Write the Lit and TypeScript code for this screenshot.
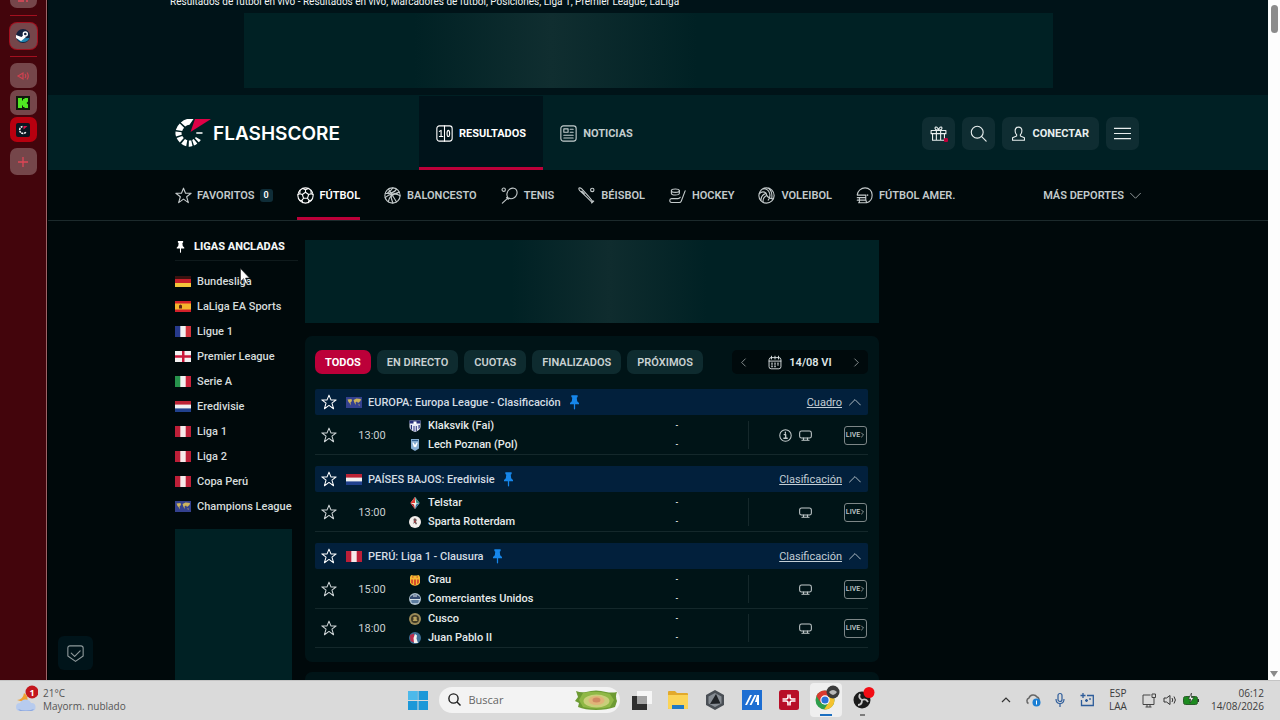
import { LitElement, html, svg, css, nothing, TemplateResult } from "lit";
import { customElement, state } from "lit/decorators.js";
import { classMap } from "lit/directives/class-map.js";

type Art = TemplateResult;

const line = (body: unknown, cls = "ico") =>
  html`<svg class=${cls} viewBox="0 0 20 20" aria-hidden="true">${body}</svg>`;

/* ---------- line icons ---------- */
const STAR = svg`<path d="M10 1.400l2.400 6h6.600l-5.300 4.100 2 6.900L10 14.300l-5.700 4.100 2-6.900L1 7.400h6.600z"/>`;
const SOCCER = svg`<circle cx="10" cy="10" r="9"/><path d="M10 6.200l3.700 2.700-1.400 4.300H7.700L6.300 8.900zM10 6.200V3.300M13.700 8.900l3-1M12.300 13.200l1.900 2.600M7.700 13.200l-1.900 2.600M6.300 8.900l-3-1M6.700 1.800L10 3.300l3.300-1.500M18.900 8.900l-2.200-1-.3-4M17 15.500l-2.800.3-1 2.600M3 15.500l2.800.3 1 2.600M1.100 8.900l2.200-1 .3-4"/>`;
const BASKET = svg`<circle cx="10" cy="10" r="9"/><path d="M5.200 2.400l9.600 15.200M1.400 7.400C7 8.400 13 6 14.800 2.500M1.300 12.500C7 7 15 7 18.900 10.500M5 17.500C5.500 12 11 8 18 6M10.500 1c-1 2-3 4-6 5.500M8.500 8.200c-.5 4 .5 7.500 2 10.700"/>`;
const TENNIS = svg`<circle cx="3.200" cy="3.200" r="2"/><path d="M8.200 12.700C5.800 9.500 7 4.500 10.500 2.300c3.200-1.900 6.600-1 7.800 1.500 1.400 3 .2 7-2.800 8.800-2.300 1.400-5 1.500-7.300.1zM8.200 12.700l-1.700-.2M8.200 12.700l.3 1.800M7.700 13.300L1.600 19"/>`;
const BASEBALL = svg`<circle cx="16.800" cy="3.400" r="2"/><path d="M1.200 1.300c1-.6 2-.2 3 .7l8 8.600 5.300 6.500M1.200 1.300c-.5 1 0 2 .9 3l8.500 8 5.900 5.700M16 18.800l2.500-2.300M4.500 5l3 3"/>`;
const HOCKEY = svg`<ellipse cx="7.500" cy="4.300" rx="4.700" ry="2"/><path d="M2.800 4.300v3c0 2.800 9.400 2.800 9.400 0v-3M19 4.500l-4.500 12c-.5 1.400-1.300 1.800-2.500 1.800H3c-2.800 0-2.800-4.600 0-4.600h7.500c1.400 0 2-.4 2.700-1.600"/>`;
const VOLLEY = svg`<circle cx="10" cy="10" r="9"/><path d="M6 2c4-.2 6.500 2 7.500 5s.5 6-1.500 8.500M9.500 7.200C6 8.500 3.500 11.500 3.300 15.800M9.500 7.200c.5 3.500 2.800 6 7.800 6.800M1.300 8c3-3 5.200-3.300 8.200-.8M6 17.900c-.5-3 1-6 4-7.800M12.500 1.500c3 2.500 4.500 6 3.700 11.700"/>`;
const HELMET = svg`<path d="M1.500 9C2 4.500 6 1 10.700 1 15.500 1 19 4.800 19 9.300c0 4.200-2.300 7.900-6.500 9.200L11.500 15V9.500H1.500zM1.500 12.500h10M1.500 15.500h10M3 18.500h9.500M4 12.500v6"/><circle cx="13.500" cy="9.500" r=".4"/>`;
const SCORES = svg`<rect x="1" y="1" width="18" height="18" rx="3"/><path d="M10 1v18M4 7.500l2-1.200v7M4 13.500h4M14.500 6.300c-2 0-2 7.200 0 7.200s2-7.200 0-7.200z"/>`;
const NEWS = svg`<rect x="1" y="1" width="18" height="18" rx="3"/><path d="M4.500 4.500h5v4h-5zM12 5h3.500M12 8.500h3.500M4.500 12h11M4.500 15.300h11"/>`;
const GIFT = svg`<path d="M1.300 6.500h17.400v3.700H1.300zM3 10.200V18h14v-7.800M7.500 6.500V18M12.500 6.500V18M10 6.500C7 6 5.500 4.800 6 3.200c.6-1.600 3.500-1 4 3.300.5-4.300 3.400-4.900 4-3.300.5 1.600-1 2.800-4 3.300z"/>`;
const SEARCH = svg`<circle cx="8.500" cy="8.500" r="7"/><path d="M13.500 13.500L19 19"/>`;
const USER = svg`<path d="M10 2.500c-2.800 0-4 1.800-4 4.300 0 2.200.7 3.700 1.800 4.700v1.500L3 15v3h14v-3l-4.800-2v-1.500c1.100-1 1.800-2.500 1.800-4.700 0-2.500-1.200-4.300-4-4.300z"/>`;
const MENU = svg`<path d="M0 4h20M0 10h20M0 16h20"/>`;
const DOWN = svg`<path d="M1 6l9 9 9-9"/>`;
const UP = svg`<path d="M1 15l9-9 9 9"/>`;
const LEFT = svg`<path d="M14 2l-8 8 8 8"/>`;
const RIGHT = svg`<path d="M6 2l8 8-8 8"/>`;
const CALENDAR = svg`<rect x="1.500" y="3" width="17" height="16" rx="3"/><path d="M1.500 8h17M5 1v4M10 1v4M15 1v4M5 11h1.500M9.300 11h1.500M13.500 11H15M5 13.500h1.500M9.300 13.500h1.500M13.500 13.500H15M5 16h1.500M9.300 16h1.500"/>`;
const INFO = svg`<circle cx="10" cy="10" r="8.800"/><path d="M8 8.500h2.300V14M7.500 14.200h5.200M9.800 5v1.600" stroke-width="2"/>`;
const TV = svg`<rect x="1" y="3" width="18" height="11" rx="3"/><path d="M7 14v2.500M13 14v2.500M4.500 17.200h11"/>`;
const SHIELD = svg`<path d="M3.500 1h13A2.500 2.500 0 0 1 19 3.500V13l-9 6.300L1 13V3.500A2.500 2.500 0 0 1 3.500 1zM5 9.500l4 4L15.500 7"/>`;

const pin = (cls: string) => html`<svg class=${cls} viewBox="0 0 10 16" aria-hidden="true">
  <path d="M1.500 0h7v2l-1 .7.5 4L10 8.500V10H5.700v5l-.7 1-.7-1v-5H0V8.500l2-1.800.5-4-1-.7z"/></svg>`;

/* ---------- flags ---------- */
const FLAGS: Record<string, Art> = {
  de: svg`<rect width="16" height="4" fill="#3a1210"/><rect y="3" width="16" height="4" fill="#c8202a"/><rect y="7" width="16" height="4" fill="#f3c53a"/>`,
  es: svg`<rect width="16" height="11" fill="#d3202a"/><rect y="2.500" width="16" height="6" fill="#f5b52c"/><path d="M4 4.500l1.500-1 1.500 1v3H4z" fill="#5a2416"/>`,
  fr: svg`<rect width="16" height="11" fill="#f1f1f1"/><rect width="5.300" height="11" fill="#273a8c"/><rect x="10.700" width="5.300" height="11" fill="#d1323c"/>`,
  en: svg`<rect width="16" height="11" fill="#f4f0f1"/><path d="M7 0h2.500v11H7zM0 4.300h16v2.400H0z" fill="#c9183a"/>`,
  it: svg`<rect width="16" height="11" fill="#f1f1f1"/><rect width="5.300" height="11" fill="#27924c"/><rect x="10.700" width="5.300" height="11" fill="#c9223b"/>`,
  nl: svg`<rect width="16" height="11" fill="#f1f1f1"/><rect width="16" height="3.600" fill="#bb2336"/><rect y="7.400" width="16" height="3.600" fill="#21418e"/>`,
  pe: svg`<rect width="16" height="11" fill="#f6e9ea"/><rect width="5.300" height="11" fill="#bd1f38"/><rect x="10.700" width="5.300" height="11" fill="#bd1f38"/>`,
  eu: svg`<rect width="16" height="11" fill="#34418f"/><path d="M1.500 2.500l4-.5.500 2-1.500 1.500.500 3-1.500-2.500-1-1zM7.500 3l3-1.500 4.500.5-.5 2-2.500 2-1-1.500-1.500 1 .5 2.500-1.500-2z" fill="#cdb45c"/><path d="M12 7.500l2 .3-.8 1z" fill="#cdb45c"/>`,
};
const flag = (id: string) => html`<svg class="flag" viewBox="0 0 16 11" aria-hidden="true">${FLAGS[id]}</svg>`;

/* ---------- club crests ---------- */
const CRESTS: Record<string, Art> = {
  klaksvik: svg`<path d="M.5.500h11v6.500q0 3-5.500 5-5.500-2-5.500-5z" fill="#e9ebf6"/><path d="M.5.500h11v3H.5zM1.800 5h1.200v5l-1.200-1zM4.500 6h1v5.500l-1-.5zM6.800 6h1v5l-1 .5zM9.500 5h1.200v3l-1.200 1z" fill="#28307c"/><path d="M4.500 1.500h3v2.500h-3z" fill="#fff"/>`,
  lech: svg`<path d="M2 0h8v9.500l-4 2.500-4-2.500z" fill="#86add0"/><path d="M4 3l2 3 2-3 .6 1L7 8.500l-1-1-1 1L3.500 4z" fill="#fff"/><path d="M3 1h6v1H3z" fill="#33608f"/>`,
  telstar: svg`<path d="M6 0l4.500 6-4.500 6-4.500-6z" fill="#f4efe6"/><path d="M6 0v6H1.500z" fill="#e33b34"/><path d="M6 0l4.500 6-3 .6z" fill="#358c86"/><path d="M1.500 6l3.500 1.500 1 4.500z" fill="#c2272b"/><path d="M10.500 6l-4.500 6 1-4.500z" fill="#2b6d9d"/>`,
  sparta: svg`<circle cx="6" cy="6" r="6" fill="#f3efec"/><path d="M4.500 3l1.200-.8 1.600.9.400 1.300-.7 1.100 1 2.500-1.200.6-1-1.800-1.500 1.100.5-2z" fill="#6a5656"/><path d="M5 5l1.300-.4.500 1.500-1.300.6z" fill="#c03a40"/>`,
  grau: svg`<path d="M1 3q1-3 3-1.500h4Q10 0 11 3v6q-2 3-5 2.700Q3 12 1 9z" fill="#f4b833"/><path d="M2.300 5.500h1.500V10l-1.500-1zM5.200 5.500h1.600v5.700H5.200zM8.200 5.500h1.500V9l-1.500 1z" fill="#d2322a"/><path d="M3 2.500h1.500v1H3zM7.500 2.500H9v1H7.500z" fill="#c5402c"/>`,
  comerciantes: svg`<circle cx="6" cy="6" r="6" fill="#a9bccb"/><path d="M1 4q5-5 10 0v2H1z" fill="#33496f"/><path d="M2 7.500q4-2 8 0l-1 2.500H3z" fill="#5c7c9f"/><path d="M4 2.500h4v1H4zM1 6.200h10v.8H1z" fill="#e8eef2"/>`,
  cusco: svg`<circle cx="6" cy="6" r="6" fill="#9a8a58"/><circle cx="6" cy="6" r="4" fill="#403a26"/><path d="M4 4.500l2-1 2 1-.5 1.500 1 2H3.700l1-2z" fill="#b8a25f"/>`,
  juanpablo: svg`<circle cx="6" cy="6" r="6" fill="#3d6f97"/><path d="M1 3l4-1.500v9L1.500 9z" fill="#b92c4c"/><path d="M6 2l2 1.500-.5 3L9 11H5l-.5-5z" fill="#f3f1ee"/>`,
};
const crest = (id: string) => html`<svg class="crest" viewBox="0 0 12 12" aria-hidden="true">${CRESTS[id]}</svg>`;

/* ---------- data ---------- */
const PINNED: [string, string][] = [
  ["de", "Bundesliga"], ["es", "LaLiga EA Sports"], ["fr", "Ligue 1"], ["en", "Premier League"],
  ["it", "Serie A"], ["nl", "Eredivisie"], ["pe", "Liga 1"], ["pe", "Liga 2"],
  ["pe", "Copa Perú"], ["eu", "Champions League"],
];

const SPORTS: [string, Art][] = [
  ["Fútbol", SOCCER], ["Baloncesto", BASKET], ["Tenis", TENNIS], ["Béisbol", BASEBALL],
  ["Hockey", HOCKEY], ["Voleibol", VOLLEY], ["Fútbol amer.", HELMET],
];

const FILTERS = ["Todos", "En directo", "Cuotas", "Finalizados", "Próximos"];

interface Match { time: string; info?: boolean; teams: [string, string][]; }
interface League { flag: string; name: string; link: string; matches: Match[]; }

const LEAGUES: League[] = [
  { flag: "eu", name: "EUROPA: Europa League - Clasificación", link: "Cuadro", matches: [
    { time: "13:00", info: true, teams: [["klaksvik", "Klaksvik (Fai)"], ["lech", "Lech Poznan (Pol)"]] } ] },
  { flag: "nl", name: "PAÍSES BAJOS: Eredivisie", link: "Clasificación", matches: [
    { time: "13:00", teams: [["telstar", "Telstar"], ["sparta", "Sparta Rotterdam"]] } ] },
  { flag: "pe", name: "PERÚ: Liga 1 - Clausura", link: "Clasificación", matches: [
    { time: "15:00", teams: [["grau", "Grau"], ["comerciantes", "Comerciantes Unidos"]] },
    { time: "18:00", teams: [["cusco", "Cusco"], ["juanpablo", "Juan Pablo II"]] } ] },
];

/* ---------- browser side strip ---------- */
@customElement("side-strip")
export class SideStrip extends LitElement {
  static styles = css`
    :host { display: flex; flex-direction: column; align-items: center; width: 47px; flex: none;
      background: #43050c; border-right: 1px solid #9c6468; overflow: hidden; }
    .tile { width: 27px; height: 25px; padding: 0; border: 0; border-radius: 7px; background: #75464a;
      display: grid; place-items: center; margin-bottom: 2px; flex: none; }
    .cut { height: 8px; border-radius: 0 0 7px 7px; margin-bottom: 7px; align-items: start; }
    .steam { height: 26px; margin: 7px 0; box-shadow: 0 0 0 1px #a3101f; }
    .on { background: #b8000f; }
    .add { height: 27px; margin-top: 4px; }
    .rule { width: 27px; height: 1px; flex: none; background: #a3101f; }
    .last { margin-bottom: 6px; }
    svg { width: 14px; height: 14px; display: block; }
    .cut svg { height: 4px; }
  `;
  render() {
    return html`
      <button class="tile cut" aria-label="Panel"><svg viewBox="0 0 14 4"><path d="M2 1h6M10 1h2" stroke="#e2485a" stroke-width="1.500"/></svg></button>
      <span class="rule"></span>
      <button class="tile steam" aria-label="Steam"><svg viewBox="0 0 14 14">
        <circle cx="7" cy="7" r="7" fill="#14233f"/><path d="M1 9.500A7 7 0 0 0 13.500 9z" fill="#2285b0"/>
        <circle cx="9.300" cy="5" r="2.700" fill="#fff"/><circle cx="9.300" cy="5" r="1.300" fill="#14233f"/>
        <path d="M0 6l5.500 2 2-2 2.500 2-3 2.500-2 1.500L0 9z" fill="#fff"/></svg></button>
      <span class="rule last"></span>
      <button class="tile" aria-label="Audio"><svg viewBox="0 0 14 14" fill="none" stroke="#d0414f" stroke-width="1.200">
        <path d="M2 7l5-3v6zM9 5q1.500 2 0 4M11 3.500q2.500 3.500 0 7"/></svg></button>
      <button class="tile" aria-label="Kick"><svg viewBox="0 0 14 14"><rect width="14" height="14" fill="#101a0c"/>
        <path d="M2 2h4v2.500h1V3h1.500V2H12v3.500l-1.500 1.500L12 8.500V12H8.500v-1H7V9.500H6V12H2z" fill="#4fe822"/></svg></button>
      <button class="tile on" aria-label="Flashscore"><svg viewBox="0 0 14 14"><rect width="14" height="14" rx="2" fill="#0a1620"/>
        <path d="M6.500 3.500A3.500 3.500 0 1 0 10 9" fill="none" stroke="#fff" stroke-width="1.500" stroke-dasharray="2 .7"/><path d="M7.500 3h4l-4 3.500z" fill="#e0134c"/></svg></button>
      <button class="tile add" aria-label="Añadir"><svg viewBox="0 0 14 14"><path d="M7 2v10M2 7h10" stroke="#df4656" stroke-width="1.300"/></svg></button>
    `;
  }
}

/* ---------- desktop task bar ---------- */
@customElement("task-bar")
export class TaskBar extends LitElement {
  static styles = css`
    :host { display: grid; grid-template-columns: 1fr auto 1fr; align-items: center; height: 40px; flex: none;
      background: #dadada; color: #3c3c3c; font: 10px/13px "Open Sans", "Noto Sans", sans-serif; box-sizing: border-box;
      border-top: 1px solid #c4c4c4; padding-bottom: 2px; }
    .weather { display: flex; align-items: center; gap: 5px; padding-left: 14px; color: #555; }
    .weather svg { width: 24px; height: 30px; }
    .badge { font: 700 9px "Open Sans", sans-serif; }
    .dock { display: flex; align-items: center; gap: 5px; }
    .app { width: 32px; height: 34px; padding: 0; border: 0; background: none; border-radius: 4px; display: grid; place-items: center; }
    .app svg { width: 30px; height: 34px; display: block; }
    .active { background: #efefef; }
    .search { display: flex; align-items: center; width: 181px; height: 26px; box-sizing: border-box; padding: 0 2px 0 9px;
      border-radius: 13px; background: #f3f3f3; gap: 8px; }
    .search .lens { width: 13px; height: 13px; flex: none; }
    .search .art { width: 43px; height: 20px; flex: none; }
    input { flex: 1; min-width: 0; border: 0; padding: 0; background: none; outline: 0; font: 11px "Open Sans", sans-serif; color: #666; }
    input::placeholder { color: #666; opacity: 1; }
    .tray { display: flex; align-items: center; justify-content: flex-end; gap: 8px; padding-right: 16px; }
    .tray svg { width: 16px; height: 16px; display: block; }
    .two { text-align: center; }
    .clock { text-align: right; margin-left: 4px; }
    .lang { margin: 0 6px; }
    .net { display: flex; gap: 5px; }
    .early { display: flex; gap: 11px; }
  `;
  render() {
    return html`
      <div class="weather">
        <svg viewBox="0 0 24 30" aria-hidden="true"><path d="M3 15q6 0 7-7 5 3 3 10z" fill="#f0a030"/>
          <path d="M6 26a4 4 0 0 1 0-8 6 6 0 0 1 11 0 4 4 0 0 1 1 8z" fill="#b7cbee"/><path d="M4 24q8 3 16 0-1 2-3 2H6z" fill="#8aa6de"/>
          <circle cx="18" cy="7" r="6.500" fill="#c3161d"/><text class="badge" x="15.500" y="10.500" fill="#fff">1</text></svg>
        <div>21°C<br />Mayorm. nublado</div>
      </div>
      <div class="dock">
        <button class="app" aria-label="Inicio"><svg viewBox="0 0 30 34"><path d="M5 8h9.500v9H5zM15.500 8H25v9h-9.500zM5 18h9.500v9H5zM15.500 18H25v9h-9.500z" fill="#1c98d8"/><path d="M5 8h9.500v9H5z" fill="#4cb9ea"/></svg></button>
        <label class="search">
          <svg class="lens" viewBox="0 0 13 13" fill="none" stroke="#1d1d1d" stroke-width="1.400"><circle cx="5.500" cy="5.500" r="4.600"/><path d="M9 9l3.500 3.500"/></svg>
          <input type="search" placeholder="Buscar" aria-label="Buscar" />
          <svg class="art" viewBox="0 0 43 20"><path d="M1 1q5 2 10 1 10-3 20 0 6 1 11 0-2 4 0 9l-2 6q-8 3-19 3T3 17l1-4-4-2 3-4z" fill="#6d9b33"/>
            <path d="M8 3q13-3 27 1l4 6-4 7q-13 3-27 0l-4-7z" fill="#8fb846"/>
            <ellipse cx="21.500" cy="11" rx="13" ry="6.500" fill="#c9cf7a"/><ellipse cx="21.500" cy="10.500" rx="8" ry="4.500" fill="#e0b478"/><ellipse cx="21.500" cy="10" rx="4" ry="2.500" fill="#d08a62"/></svg>
        </label>
        <button class="app" aria-label="Vista de tareas"><svg viewBox="0 0 30 34"><path d="M11 8h15v13H11z" fill="#f6f6f6"/><path d="M6 13h15v14H6z" fill="#2f2f2f"/><path d="M11 13h10v8H11z" fill="#a4a4a4"/></svg></button>
        <button class="app" aria-label="Explorador"><svg viewBox="0 0 30 34"><path d="M5 9q0-1 1-1h6l2 2h10q1 0 1 1v14q0 1-1 1H6q-1 0-1-1z" fill="#e2a92c"/><path d="M5 12h20v13q0 1-1 1H6q-1 0-1-1z" fill="#fbd457"/><path d="M9 22h12v4H9z" fill="#2179c5"/></svg></button>
        <button class="app" aria-label="Armoury"><svg viewBox="0 0 30 34"><path d="M15 7l9 5v10l-9 5-9-5V12z" fill="#4a4f55"/><path d="M15 10l6.500 3.500v7L15 24l-6.500-3.500v-7z" fill="#878d94"/><path d="M16 11l4.500 9.500L10 21z" fill="#1f2226"/></svg></button>
        <button class="app" aria-label="MyASUS"><svg viewBox="0 0 30 34"><path d="M5 7h20v20H5z" fill="#1d6ed2"/><path d="M8 22l5-10h2l-5 10zM12.500 22l5-10h2l-5 10zM20 12h2v10h-2v-3h-2z" fill="#fff"/></svg></button>
        <button class="app" aria-label="Grabadora"><svg viewBox="0 0 30 34"><rect x="5" y="7" width="20" height="20" rx="2.500" fill="#b80f28"/><path d="M14 11.500v2.500q0 2-2 2H8.500M16 22.500V20q0-2 2-2h3.500M16 11.500v2.500q0 2 2 2h3.500M14 22.500V20q0-2-2-2H8.500" fill="none" stroke="#fff" stroke-width="1.600"/><circle cx="15" cy="17" r="1" fill="#b80f28"/></svg></button>
        <button class="app active" aria-label="Chrome"><svg viewBox="0 0 30 34"><circle cx="14" cy="17" r="9.500" fill="#2f9e4c"/><path d="M14 7.500a9.500 9.500 0 0 0-8.600 5.500L10 20l4-3h9a9.500 9.500 0 0 0-9-9.500z" fill="#d93a30"/><path d="M23 14a9.500 9.500 0 0 1-10 12.500L18 19l-1-5z" fill="#f5c22f"/><circle cx="14" cy="17" r="4.700" fill="#fff"/><circle cx="14" cy="17" r="3.600" fill="#2b71d9"/>
          <circle cx="22" cy="9" r="6.500" fill="#3b3b3b"/><path d="M18 9q4-4 8 0-2 3-4 3t-4-3z" fill="#b9b9b9"/><path d="M9 31h12v2H9z" fill="#1b6fc0"/></svg></button>
        <button class="app" aria-label="OBS"><svg viewBox="0 0 30 34"><circle cx="14" cy="17" r="8.500" fill="#1b1b1b"/><path d="M14 17q-4-2-2-6M14 17q4-2 6 2M14 17q0 5-4 5" fill="none" stroke="#c9c9c9" stroke-width="1.800"/><circle cx="21" cy="9.500" r="5.500" fill="#f30c14"/><path d="M12 31h5v2h-5z" fill="#7c7c7c"/></svg></button>
      </div>
      <div class="tray">
        <div class="early">
          <svg viewBox="0 0 16 16" fill="none" stroke="#333" stroke-width="1.200"><path d="M4 10l4-4 4 4"/></svg>
          <svg viewBox="0 0 16 16"><path d="M3.500 11.500A3 3 0 0 1 4 6a4.500 4.500 0 0 1 8-1 3 3 0 0 1 2 3" fill="none" stroke="#666" stroke-width="1.500"/><circle cx="11.500" cy="10.500" r="4" fill="#1b7fd4"/><path d="M11 8.500h1v4h-1z" fill="#fff"/></svg>
          <svg viewBox="0 0 16 16" fill="none" stroke="#2d5c9a" stroke-width="1.200"><rect x="6" y="1.500" width="4" height="8" rx="2"/><path d="M4 7q0 4.500 4 4.500T12 7M8 11.500V15"/></svg>
          <svg viewBox="0 0 16 16" fill="none" stroke="#2d5c9a" stroke-width="1.300"><path d="M8 3.500h6.300v10H2.500V8M4 1v5M1.500 3.500h5M7.500 7v3M6 8.500h3M11 6v2"/></svg>
        </div>
        <div class="two lang">ESP<br />LAA</div>
        <div class="net">
          <svg viewBox="0 0 16 16" fill="none" stroke="#444"><path d="M9.500 3H2v9.500h11V8M6 12.500V15M9 12.500V15M4.500 15h6M11 2h3.500v3.500H11zM13 5.500V8"/></svg>
          <svg viewBox="0 0 16 16" fill="none" stroke="#333"><path d="M2 6h2.500L8 3.500v9L4.500 10H2zM10 6q1.500 2 0 4M12 4.500q2.800 3.500 0 7"/></svg>
          <svg viewBox="0 0 16 16"><rect x=".5" y="4.500" width="14" height="8" rx="2" fill="#1c8a1f" stroke="#2a5c2b"/><path d="M15 7h1v3h-1z" fill="#333"/><path d="M8.500 1L5.500 7h2.300L7 11l3.800-5.500H8.300z" fill="#fff" stroke="#222" stroke-width=".6"/></svg>
        </div>
        <div class="clock">06:12<br />14/08/2026</div>
      </div>
    `;
  }
}

/* ---------- page ---------- */
@customElement("app-root")
export class AppRoot extends LitElement {
  @state() private filter = "Todos";

  static styles = css`
    :host { display: flex; flex-direction: column; height: 100vh; overflow: hidden; background: #000809;
      font-family: Roboto, Inter, "Liberation Sans", sans-serif; font-size: 11px; color: #dfe5e6; }
    * { box-sizing: border-box; }
    button { font: inherit; color: inherit; border: 0; padding: 0; background: none; }
    a { color: inherit; text-decoration: none; }
    svg { display: block; flex: none; }
    .screen { flex: 1; min-height: 0; display: flex; }
    .page { flex: 1; min-width: 0; position: relative; overflow: hidden; background: #00090b; border-left: 1px solid #000; }
    .wrap { max-width: 966px; margin: 0 auto; }
    .ico { width: 17px; height: 17px; fill: none; stroke: currentColor; stroke-width: 1.300; stroke-linejoin: round; stroke-linecap: round; }

    .top { background: #001318; margin-top: -4px; padding-bottom: 7px; }
    .title { max-width: 976px; margin: 0 auto; font-size: 10px; line-height: 12px; font-weight: 400; white-space: nowrap; color: #f2f5f5; }
    .ad { background: #002124; }
    .banner { width: min(100%, 809px); height: 75px; margin: 5px 0 0 69px;
      background: linear-gradient(90deg, #002124 21%, #102e30 38%, #002124 56%); }

    .header { background: #002024; }
    .bar { display: flex; align-items: center; height: 75px; padding-top: 1px; }
    .logo { display: flex; align-items: center; gap: 2px; width: 244px; font-family: Inter, sans-serif; font-size: 19px; font-weight: 600; color: #fff; }
    .logo svg { width: 36px; height: 28px; }
    .tab { display: flex; align-items: center; gap: 6px; height: 100%; padding: 0 17px; font-weight: 700; text-transform: uppercase; color: #c3cdce; border-bottom: 3px solid transparent; border-top: 3px solid transparent; }
    .tab.on { background: #00131a; color: #fff; border-bottom-color: #bc0039; }
    .tools { display: flex; gap: 7px; margin-left: auto; padding-right: 2px; }
    .tool { display: flex; align-items: center; justify-content: center; gap: 6px; min-width: 33px; height: 33px; border-radius: 7px; background: #0f2d32; color: #e8eeee; font-weight: 700; text-transform: uppercase; position: relative; }
    .login { padding: 0 10px 0 8px; }
    .dot { position: absolute; right: 7px; bottom: 8px; width: 4px; height: 4px; border-radius: 1px; background: #bc0039; }

    .sports { border-bottom: 1px solid #1c2a2c; background: #00090b; }
    .sports .wrap { display: flex; gap: 24px; height: 50px; }
    .sport { display: flex; align-items: center; gap: 6px; font-weight: 600; text-transform: uppercase; color: #c3cacb; white-space: nowrap; border-bottom: 3px solid transparent; border-top: 3px solid transparent; }
    .sport.on { color: #fff; border-bottom-color: #bc0039; }
    .count { background: #0f2d38; border-radius: 3px; width: 13px; height: 13px; line-height: 13px; text-align: center; font-size: 9px; color: #fff; }
    .fav { gap: 5px; }
    .more { margin-left: auto; }
    .more .ico { width: 11px; height: 11px; }

    .cols { display: grid; grid-template-columns: 123px minmax(0, 574px) 1fr; gap: 7px; padding-top: 19px; }
    .pinhead { display: flex; align-items: center; gap: 9px; margin: 0; height: 21px; padding: 0 0 7px 1px; border-bottom: 1px solid #0f1a1c; font-size: 11px; font-weight: 800; color: #f2f5f5; white-space: nowrap; }
    .pinhead svg { width: 9px; height: 12px; fill: #fff; }
    .pins { list-style: none; margin: 8px 0 10px; padding: 0; }
    .pins a { display: flex; align-items: center; gap: 6px; height: 25px; font-weight: 500; color: #d6dcdc; white-space: nowrap; }
    .flag { width: 16px; height: 11px; }
    .tower { width: 117px; height: 240px; }
    .mid { height: 83px; background: linear-gradient(90deg, #002124 36%, #0f2c2e 53%, #002124 70%); }
    .card { background: #001417; border-radius: 7px; margin-top: 13px; padding: 14px 11px 14px 10px; }
    .card + .card { margin-top: 10px; }
    .filters { display: flex; align-items: center; gap: 6px; margin-bottom: 15px; }
    .chip { height: 24px; padding: 0 10px; border-radius: 7px; background: #0e2b2f; font-size: 11px; font-weight: 600; text-transform: uppercase; color: #c9d1d2; white-space: nowrap; }
    .chip.on { background: #bc0039; color: #fff; font-weight: 700; }
    .date { display: flex; align-items: center; justify-content: space-between; margin-left: auto; width: 136px; height: 24px; padding: 0 7px; background: #000a0c; border-radius: 5px; font-weight: 600; }
    .day { display: flex; align-items: center; gap: 7px; }
    .day .ico { width: 14px; height: 15px; }
    .step .ico { width: 9px; height: 9px; }

    .league + .league { margin-top: 11px; }
    .lhead { display: flex; align-items: center; height: 26px; margin-bottom: 1px; background: #02203c; border-radius: 2px; }
    .star { width: 27px; height: 26px; display: grid; place-items: center; color: #cfd6d8; flex: none; }
    .star .ico { width: 16px; height: 16px; }
    .lhead .star { color: #fff; margin-right: 4px; }
    .lname { margin: 0 9px 0 6px; font-size: 11px; font-weight: 500; color: #d4dde4; white-space: nowrap; }
    .pinned { width: 9px; height: 15px; fill: #1686ea; }
    .lhead a { margin-left: auto; text-decoration: underline; color: #c3ced6; }
    .fold { margin: 0 7px; }
    .fold .ico { width: 12px; height: 12px; }
    .match { display: grid; grid-template-columns: 27px 60px 1fr 120px; align-items: center; height: 39px; border-bottom: 1px solid #14282b; }
    .time { text-align: center; color: #c8d0d1; }
    .team { display: grid; grid-template-columns: 26px 1fr 18px 62px; align-items: center; height: 19px; font-weight: 500; color: #e6ebeb; }
    .team .crest { width: 12px; height: 12px; justify-self: center; }
    .score { text-align: center; font-size: 7px; font-weight: 700; color: #fff; }
    .tail { display: flex; align-items: center; justify-content: flex-end; height: 28px; padding-right: 1px; border-left: 1px solid #15282b; color: #c4cccd; }
    .tail .ico { width: 13px; height: 13px; margin-left: 7px; stroke-width: 1.600; }
    .tail .live { display: flex; align-items: center; justify-content: center; width: 23px; height: 19px; margin-left: 32px; border: 1px solid #7d8687; border-radius: 3px; font-size: 7px; font-weight: 600; color: #b9c1c2; }
    .tail .live .ico { width: 5px; height: 8px; margin: 0; stroke-width: 3; }

    .consent { position: absolute; left: 10px; bottom: 10px; width: 35px; height: 34px; display: grid; place-items: center; border-radius: 6px; background: #00141a; color: #8f9a9c; }
    .cursor { position: absolute; left: 192px; top: 268px; width: 10px; height: 17px; }
    .scroll { flex: none; width: 12px; background: #fdfdfd; display: flex; flex-direction: column; justify-content: space-between; align-items: center; padding: 5px 0 3px; }
    .thumb { width: 7px; height: 28px; border-radius: 4px; background: #8b8b8b; }
    .arrow { width: 8px; height: 6px; fill: #8b8b8b; }
  `;

  private star() {
    return html`<button class="star" aria-label="Añadir a favoritos">${line(STAR)}</button>`;
  }

  private match(m: Match) {
    return html`<div class="match">
      ${this.star()}
      <span class="time">${m.time}</span>
      <div>${m.teams.map(([id, name]) => html`<div class="team">${crest(id)}<span>${name}</span><span class="score">-</span></div>`)}</div>
      <div class="tail">
        ${m.info ? line(INFO) : nothing}${line(TV)}
        <a class="live" href="#live">LIVE${line(RIGHT)}</a>
      </div>
    </div>`;
  }

  private league(l: League) {
    return html`<section class="league">
      <div class="lhead">
        ${this.star()}${flag(l.flag)}
        <h3 class="lname">${l.name}</h3>${pin("pinned")}
        <a href="#tabla">${l.link}</a>
        <button class="fold" aria-label="Plegar">${line(UP)}</button>
      </div>
      ${l.matches.map((m) => this.match(m))}
    </section>`;
  }

  render() {
    return html`
      <div class="screen">
        <side-strip></side-strip>
        <div class="page">
          <div class="top">
            <div class="title">Resultados de fútbol en vivo - Resultados en vivo, Marcadores de fútbol, Posiciones, Liga 1, Premier League, LaLiga</div>
            <div class="wrap"><div class="ad banner"></div></div>
          </div>
          <header class="header">
            <div class="wrap bar">
              <a class="logo" href="#inicio">
                <svg viewBox="0 0 36 28" aria-hidden="true">
                  <path d="M18.500 0L14.500 5.800A8 8 0 0 0 10.200 7.500L5.800 3.600A14 14 0 0 1 18.500 0z" fill="#fff"/>
                  <path d="M4.800 4.600l4.300 4.200A8 8 0 0 0 7.200 12L.8 11A13.500 13.500 0 0 1 4.800 4.600zM.5 12.600l6.100.7q-.1 1.300.2 2.500L1 17.500q-.9-2.400-.5-4.900zM1.700 19l5.600-2q.6 1.200 1.500 2.100l-4 4.500q-2-1.900-3.100-4.600zM6.200 24.700l3.800-4.600q1 .8 2.300 1.200l-1.100 6q-2.700-.7-5-2.600zM13.700 27.800l.2-6.200q1.200.1 2.300-.3l1.300 5.800q-1.700.8-3.800.7zM19 26.500l-1.800-5.600 1.500-.9 3.600 4.600q-1.400 1.300-3.300 1.900zM23.700 23.200L20 19.300l.8-1.200 5 2.800q-.8 1.400-2.100 2.300zM21.300 13.200h6.200v1.500h-6.200z" fill="#fff"/>
                  <path d="M20 0h16L15.500 13z" fill="#e00046"/>
                </svg>FLASHSCORE</a>
              <a class="tab on" href="#resultados">${line(SCORES)}Resultados</a>
              <a class="tab" href="#noticias">${line(NEWS)}Noticias</a>
              <div class="tools">
                <button class="tool" aria-label="Regalos">${line(GIFT)}<span class="dot"></span></button>
                <button class="tool" aria-label="Buscar">${line(SEARCH)}</button>
                <button class="tool login">${line(USER)}Conectar</button>
                <button class="tool" aria-label="Menú">${line(MENU)}</button>
              </div>
            </div>
          </header>
          <nav class="sports">
            <div class="wrap">
              <a class="sport fav" href="#favoritos">${line(STAR)}Favoritos<span class="count">0</span></a>
              ${SPORTS.map(([name, icon], i) => html`<a class=${classMap({ sport: true, on: i === 0 })} href="#deporte">${line(icon)}${name}</a>`)}
              <button class="sport more">Más deportes${line(DOWN)}</button>
            </div>
          </nav>
          <div class="wrap cols">
            <aside>
              <h2 class="pinhead">${pin("")}LIGAS ANCLADAS</h2>
              <ul class="pins">${PINNED.map(([f, n]) => html`<li><a href="#liga">${flag(f)}${n}</a></li>`)}</ul>
              <div class="ad tower"></div>
            </aside>
            <main>
              <div class="ad mid"></div>
              <div class="card">
                <div class="filters">
                  ${FILTERS.map((f) => html`<button class=${classMap({ chip: true, on: f === this.filter })} @click=${() => (this.filter = f)}>${f}</button>`)}
                  <div class="date">
                    <button class="step" aria-label="Día anterior">${line(LEFT)}</button>
                    <button class="day">${line(CALENDAR)}14/08 VI</button>
                    <button class="step" aria-label="Día siguiente">${line(RIGHT)}</button>
                  </div>
                </div>
                ${LEAGUES.map((l) => this.league(l))}
              </div>
              <div class="card"></div>
            </main>
          </div>
          <button class="consent" aria-label="Privacidad">${line(SHIELD)}</button>
          <svg class="cursor" viewBox="0 0 10 17" aria-hidden="true"><path d="M.5.500v13l3-2.800 2 5 2-.8-2-4.800h4z" fill="#fff" stroke="#222" stroke-width=".6"/></svg>
        </div>
        <div class="scroll"><span class="thumb"></span><svg class="arrow" viewBox="0 0 8 6" aria-hidden="true"><path d="M0 0h8L4 6z"/></svg></div>
      </div>
      <task-bar></task-bar>
    `;
  }
}
